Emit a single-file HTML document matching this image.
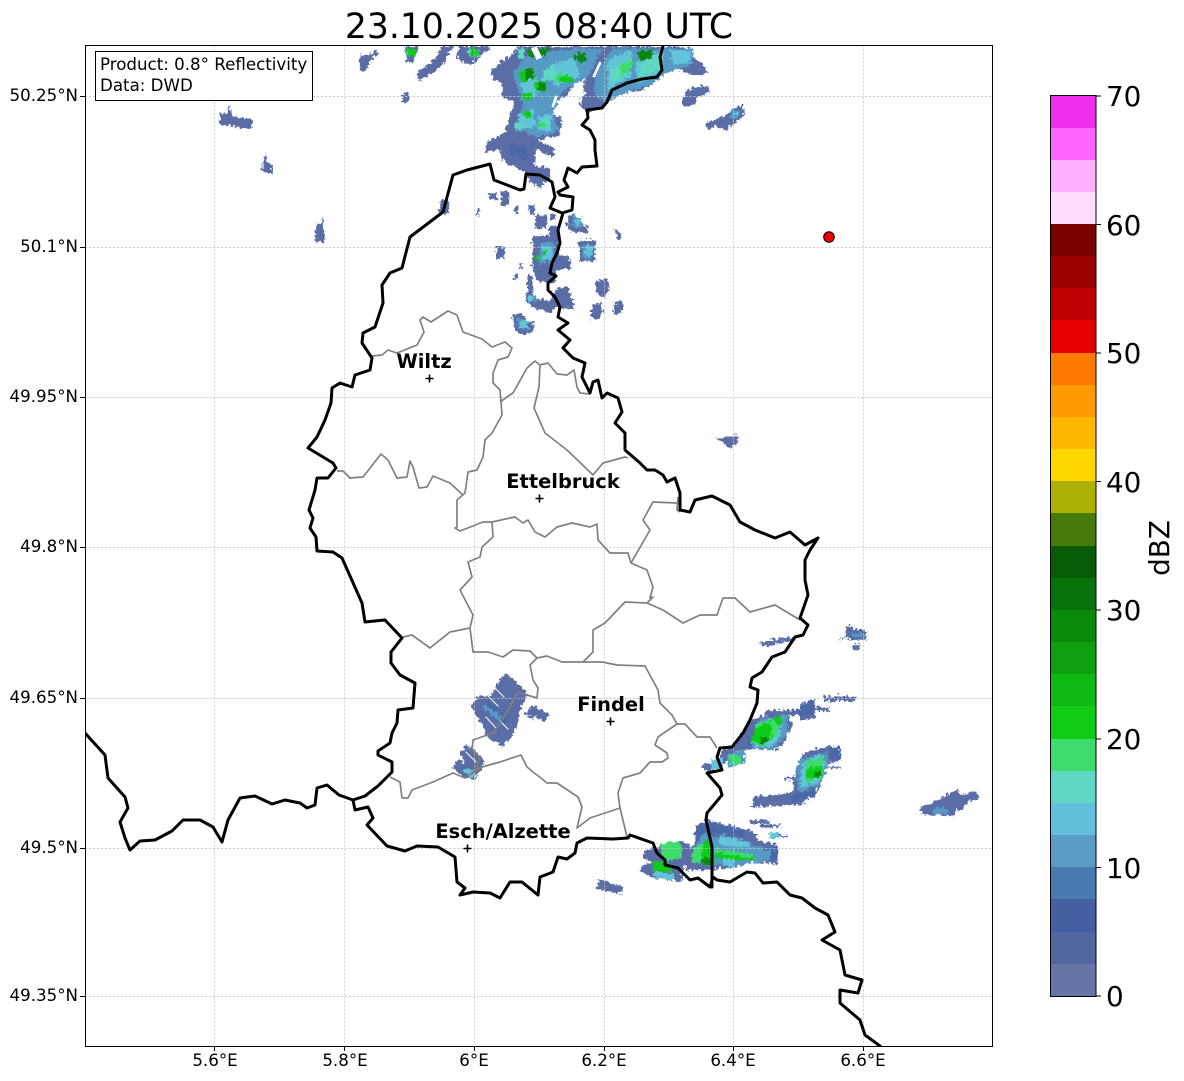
<!DOCTYPE html>
<html lang="en">
<head>
<meta charset="utf-8">
<title>23.10.2025 08:40 UTC</title>
<style>
html,body{margin:0;padding:0;background:#fff}
svg{display:block}
text{font-family:"DejaVu Sans","Liberation Sans",sans-serif;fill:#000}
.t{font-size:16.67px}
.c{font-size:19.44px;font-weight:bold;text-anchor:middle}
.b{font-size:27.8px}
.g{fill:none;stroke:#808080;stroke-width:1.7;stroke-linejoin:round}
.k{fill:none;stroke:#000;stroke-width:3;stroke-linejoin:round;stroke-linecap:round}
</style>
</head>
<body>
<svg width="1184" height="1081" viewBox="0 0 1184 1081" xmlns="http://www.w3.org/2000/svg">
<defs>
<clipPath id="ax"><rect x="85" y="45" width="907" height="1001"/></clipPath>
<filter id="rough" filterUnits="userSpaceOnUse" x="85" y="30" width="907" height="900">
<feTurbulence type="turbulence" baseFrequency="0.22" numOctaves="1" seed="4" result="n"/>
<feDisplacementMap in="SourceGraphic" in2="n" scale="7" xChannelSelector="R" yChannelSelector="G"/>
</filter>
</defs>
<rect width="1184" height="1081" fill="#fff"/>
<g clip-path="url(#ax)">
<g filter="url(#rough)">
<!-- rain base -->
<g fill="#5a6da6">
<polygon points="517,44 505,56 488,68 492,78 499,80 500,95 512,100 505,120 503,130 484,140 482,150 497,148 503,160 520,168 527,178 537,186 548,176 548,167 532,163 533,146 540,150 552,155 552,145 535,138 557,133 560,115 546,112 552,100 565,92 572,82 583,75 578,103 585,110 598,106 612,92 640,88 662,72 668,65 690,72 707,72 700,62 692,55 680,44"/>
<polygon points="358,53 368,52 375,47 376,52 370,58 362,69 357,68"/>
<polygon points="402,44 416,44 410,60 405,59"/>
<polygon points="440,44 451,44 442,60 430,70 420,78 415,77 416,68 428,62"/>
<polygon points="458,44 490,44 480,52 470,62 460,60 453,53"/>
<rect x="400" y="92" width="6" height="8"/>
<polygon points="217,111 224,112 227,102 229,112 240,116 250,117 249,128 240,126 228,124 218,122"/>
<polygon points="260,160 263,152 265,160 270,162 270,172 261,170"/>
<polygon points="313,223 319,220 320,213 321,222 322,240 313,240"/>
<rect x="437" y="198" width="9" height="14"/>
<rect x="487" y="190" width="8" height="7"/>
<rect x="499" y="189" width="7" height="14"/>
<rect x="513" y="205" width="3" height="6"/>
<rect x="527" y="202" width="5" height="10"/>
<rect x="474" y="207" width="3" height="7"/>
<rect x="533" y="213" width="11" height="13"/>
<rect x="547" y="212" width="6" height="6"/>
<polygon points="565,213 572,212 579,222 585,225 585,230 572,230 565,226"/>
<polygon points="612,227 614,227 618,234 618,237 616,237"/>
<rect x="577" y="238" width="16" height="21"/>
<rect x="494" y="244" width="8" height="12"/>
<polygon points="547,223 557,223 557,252 568,253 568,267 553,267 553,280 535,280 530,268 530,233 547,233"/>
<rect x="518" y="260" width="2" height="6"/>
<rect x="512" y="271" width="3" height="6"/>
<rect x="525" y="273" width="5" height="20"/>
<polygon points="523,290 530,290 534,297 548,298 553,287 565,285 572,300 572,307 563,306 553,305 548,310 535,307 527,302 523,299"/>
<polygon points="593,279 604,277 607,285 604,295 597,294 593,287"/>
<polygon points="591,302 600,300 601,310 595,318 590,318 589,308"/>
<polygon points="611,303 618,298 622,308 614,312 611,310"/>
<polygon points="510,313 518,310 525,318 532,320 530,330 521,332 514,328 511,322"/>
<polygon points="683,90 690,86 705,83 707,90 695,95 690,105 680,102"/>
<polygon points="704,120 710,118 722,113 732,105 741,103 742,112 733,120 724,128 712,124 704,127"/>
<polygon points="714,436 725,434 736,433 735,440 727,446 720,440"/>
<polygon points="757,640 770,638 792,635 793,637 775,641 760,645"/>
<polygon points="843,624 849,624 850,627 864,627 864,637 845,637 844,636 836,637 843,634"/>
<rect x="850" y="642" width="7" height="5"/>
<rect x="821" y="694" width="32" height="5"/>
<polygon points="797,704 812,697 813,715 797,718"/>
<rect x="763" y="708" width="36" height="5"/>
<rect x="811" y="705" width="16" height="4"/>
<polygon points="745,722 752,716 772,712 785,712 790,722 782,740 775,748 750,746 735,748 722,760 718,767 708,770 700,765 702,760 712,762 720,748 733,742"/>
<polygon points="820,745 838,744 838,757 822,762 818,783 812,792 800,802 750,805 750,795 765,793 790,790 793,770 800,752"/>
<rect x="782" y="775" width="10" height="3"/>
<rect x="820" y="764" width="18" height="2"/>
<polygon points="918,805 930,800 940,795 950,790 955,787 958,792 975,790 977,796 965,800 960,806 955,808 950,813 940,813 920,812"/>
<polygon points="693,823 707,818 747,828 755,832 755,838 775,843 775,862 753,860 730,865 707,868 685,868 683,853 692,840"/>
<rect x="747" y="818" width="21" height="3"/>
<rect x="757" y="822" width="21" height="3"/>
<rect x="777" y="833" width="8" height="2"/>
<polygon points="642,848 653,845 678,838 688,843 688,848 680,872 683,876 677,879 652,876 637,868 640,862 650,860 640,855"/>
<polygon points="597,876 620,884 619,892 595,886"/>
<polygon points="503,670 520,685 525,690 520,702 512,730 500,745 485,735 480,723 468,703 477,692 487,695 497,678"/>
<polygon points="530,703 547,712 541,719 532,714 532,718 522,712 525,708"/>
<polygon points="465,742 482,757 480,765 472,777 458,773 450,765 455,758 462,762 458,752"/>
</g>
<!-- rain dark blue -->
<g fill="#4a68a8">
<polygon points="488,700 505,715 500,725 485,710"/>
<polygon points="505,140 525,145 525,158 508,152"/>
<polygon points="797,702 811,698 811,712 797,714"/>
<polygon points="828,745 838,745 838,755 828,757"/>
<polygon points="693,824 708,820 742,829 742,835 712,830 708,842 693,842"/>
<polygon points="755,850 775,846 775,859 755,858"/>
<polygon points="745,734 755,730 755,742 745,744"/>
<polygon points="790,793 815,786 812,794 790,800"/>
</g>
<!-- rain mid blue -->
<g fill="#559ac4">
<polygon points="510,72 525,52 575,46 600,46 585,75 562,88 550,112 558,128 535,135 515,125 520,100 515,85"/>
<polygon points="592,72 610,46 690,46 690,62 665,70 650,82 620,92 602,100 592,92"/>
<polygon points="537,240 551,240 551,260 537,262"/>
<rect x="571" y="215" width="8" height="10"/><rect x="580" y="242" width="11" height="14"/>
<polygon points="514,314 524,318 528,328 517,326"/>
<rect x="525" y="292" width="8" height="8"/><rect x="728" y="108" width="9" height="8"/>
<rect x="931" y="806" width="14" height="6"/><rect x="850" y="631" width="13" height="3"/>
<rect x="768" y="830" width="10" height="6"/>
<polygon points="755,718 785,712 785,730 772,747 750,745"/>
<polygon points="725,752 743,746 743,760 725,765"/>
<polygon points="796,758 820,750 826,752 824,770 815,785 795,790"/>
<polygon points="700,832 745,840 768,850 768,858 730,864 692,862 692,845"/>
<polygon points="480,705 484,703 500,715 497,719"/>
</g>
<!-- rain light teal -->
<g fill="#62c4d8">
<polygon points="518,82 534,74 538,90 524,97"/>
<polygon points="546,63 572,55 577,74 553,85"/>
<polygon points="516,112 530,106 534,124 518,128"/>
<polygon points="536,114 550,112 548,128 538,128"/>
<polygon points="605,58 630,48 628,74 606,88"/>
<polygon points="632,60 662,46 660,68 636,82"/>
<polygon points="668,48 688,48 688,60 670,62"/>
<polygon points="540,245 549,245 549,257 540,257"/>
<rect x="518" y="318" width="8" height="8"/>
<rect x="573" y="216" width="5" height="7"/><rect x="583" y="244" width="7" height="10"/>
<rect x="525" y="293" width="6" height="6"/><rect x="731" y="110" width="4" height="4"/>
<polygon points="708,758 720,754 720,768 708,769"/>
<polygon points="801,760 816,752 824,762 816,780 798,785"/>
<polygon points="755,722 780,714 778,735 768,744 752,745"/>
<polygon points="718,833 745,839 748,846 716,842"/>
<polygon points="720,855 732,855 732,865 720,864"/>
<polygon points="652,868 672,872 672,878 652,875"/>
<rect x="767" y="830" width="10" height="6"/>
<polygon points="460,768 466,766 473,771 470,776"/>
</g>
<!-- rain mint -->
<g fill="#5ed8c2">
<rect x="512" y="120" width="7" height="8"/><polygon points="537,117 547,117 546,126 538,126"/>
<polygon points="540,68 554,64 553,76 541,80"/>
<polygon points="608,68 628,56 626,72 610,80"/>
<polygon points="637,62 660,50 658,66 638,76"/>
<rect x="516" y="46" width="6" height="10"/>
<rect x="466" y="46" width="11" height="8"/><rect x="404" y="46" width="9" height="8"/>
<polygon points="805,760 822,754 820,770 803,772"/>
</g>
<!-- rain bright mint green -->
<g fill="#3edc6c">
<polygon points="753,722 778,714 776,730 762,744 750,741"/>
<rect x="728" y="752" width="10" height="10"/>
<polygon points="804,760 821,755 819,776 803,780"/>
<polygon points="657,842 678,838 680,855 660,860"/>
<polygon points="690,845 700,841 712,860 690,860"/>
<polygon points="712,846 752,852 752,856 712,850"/>
<rect x="555" y="72" width="12" height="8"/>
<polygon points="618,62 630,58 628,70 618,74"/>
<rect x="537" y="120" width="7" height="4"/>
</g>
<!-- rain green -->
<g fill="#10cc14">
<polygon points="752,726 768,720 770,735 762,742 750,738"/>
<rect x="772" y="714" width="7" height="8"/>
<polygon points="803,767 820,763 818,775 803,778"/>
<polygon points="650,858 668,862 670,870 650,868"/>
<polygon points="702,838 708,838 712,860 698,862"/>
<polygon points="712,850 752,856 752,859 712,855"/>
<rect x="557" y="74" width="13" height="6"/><rect x="521" y="108" width="7" height="7"/><rect x="520" y="90" width="9" height="7"/>
<polygon points="532,80 543,78 545,88 534,90"/>
<polygon points="516,70 530,64 533,76 520,80"/>
<rect x="540" y="248" width="4" height="5"/><rect x="533" y="253" width="4" height="6"/>
<rect x="405" y="46" width="8" height="8"/><rect x="468" y="46" width="8" height="7"/>
</g>
<!-- rain dark green -->
<g fill="#0a860a">
<polygon points="522,68 530,65 532,76 524,78"/>
<polygon points="523,48 548,46 540,55 528,55"/>
<polygon points="573,53 583,50 584,59 575,61"/>
<polygon points="635,50 651,46 649,56 637,58"/>
<rect x="699" y="856" width="10" height="6"/><rect x="536" y="80" width="7" height="8"/><rect x="758" y="735" width="8" height="6"/>
<rect x="812" y="769" width="6" height="6"/>
</g>
</g>
<!-- white gaps in rain -->
<g fill="none" stroke="#fff" stroke-linecap="square">
<path stroke-width="6" d="M535 50L538 56"/>
<path stroke-width="2.500" d="M600 63L594 76M585 93L580 97M556 97L553 106"/>
<path stroke-width="1" d="M495 688L504 697M488 696L498 706M486 717L496 728M500 721L508 729M466 752L476 762M748 828L755 830M760 838L772 842"/>
</g>
<!-- grid -->
<g fill="none" stroke="#c4c4c4" stroke-width="0.7" stroke-dasharray="2.5 1.5">
<path d="M214.500 45V1046M344.500 45V1046M474.500 45V1046M604.500 45V1046M733.500 45V1046M863.500 45V1046"/>
<path d="M85 96.500H992M85 247.500H992M85 397.500H992M85 547.500H992M85 698.500H992M85 848.500H992M85 996.500H992"/>
</g>
<!-- cantons -->
<g class="g">
<polyline points="372,356 382,355 388,350 397,353 417,345 424,332 420,320 423,317 431,322 448,311 457,315 463,332 482,339 492,347 505,342 512,348 508,357 498,360 493,373 493,383 500,390 501,402 502,415 492,433 485,440 483,457 477,470 468,472 465,493 457,500 457,527 455,528 460,531 483,522 492,522 510,518 515,517 523,523 528,520 535,532 545,537 557,527 572,523 590,527 597,524 598,540 610,553 628,553 631,563 647,570 653,587 650,598 653,597 647,603"/>
<polyline points="337,471 343,471 350,478 363,477 381,454 388,460 397,478 407,477 410,461 413,467 419,488 427,487 433,476 450,483 463,495"/>
<polyline points="500,402 507,397 513,393 527,368 535,361 540,365 548,363 557,374 567,375 574,370 577,387 580,393 590,394"/>
<polyline points="540,365 539,387 534,408 545,433 567,450 593,475 603,463 625,457 628,458"/>
<polyline points="677,503 653,502 643,520 650,530 631,563"/>
<polyline points="678,497 677,510 680,512"/>
<polyline points="492,522 493,537 482,547 480,557 468,562 472,577 460,590 473,615 470,628 473,652 488,652 503,657 513,650 530,651 537,658 547,656 562,662 583,662 593,652 593,630 605,623 625,602 647,603 663,610 683,623 700,615 717,615 723,598 735,598 750,612 775,605 800,620"/>
<polyline points="403,637 412,635 430,648 450,632 470,628"/>
<polyline points="583,662 602,662 617,665 645,666 658,690 660,703 672,715 677,724 685,724 697,737 710,737 717,748"/>
<polyline points="677,724 658,737 655,745 667,753 668,758 662,762 650,762 640,773 623,778 618,793 620,808 590,818 577,828 582,807 578,797 557,783 547,783 541,778 533,772 527,767 521,755 500,762 482,767 465,778 453,773 433,782 412,790 408,798 402,798 400,782 390,777"/>
<polyline points="620,808 627,837"/>
<polyline points="537,658 530,665 533,680 538,688 537,698 527,695 518,692 507,712 500,723 493,733 473,740 472,750 480,757 476,770 465,778"/>
</g>
<!-- country borders -->
<g class="k">
<polyline points="85,733 105,755 108,778 125,797 128,808 120,822 125,838 130,850 140,841 155,840 172,831 183,820 200,820 213,827 222,842 228,820 240,798 255,796 272,804 285,800 300,803 307,808 315,805 317,788 327,785 339,795 353,800 365,796 378,786 392,772 392,762 378,755 378,751 390,743 392,733 397,723 398,710 413,708 415,683 400,675 391,663 391,652 402,638 385,620 365,622 362,603 342,558 333,552 317,551 316,537 310,528 313,518 309,510 315,490 317,478 328,478 336,468 333,463 308,448 317,437 325,420 331,403 332,388 340,383 352,387 355,375 370,370 372,358 362,343 363,333 375,327 383,303 382,285 390,273 402,268 410,237 443,212 453,175 467,170 490,164 494,180 520,190 524,189 526,174 540,175 552,182 555,197 550,208 562,213 572,210 573,197 560,195 558,192 568,187 564,180 568,168 577,173 582,167 597,166 595,150 595,140 590,130 582,125 588,118 587,110 602,108 607,102 612,90 627,83 642,79 657,77 662,70 660,57 663,46"/>
<polyline points="563,213 558,230 560,243 557,253 552,263 550,273 556,276 548,283 548,290 555,297 560,307 558,317 568,323 558,330 570,340 563,348 573,358 585,363 582,377 590,393 593,382 598,380 602,398 607,393 618,398 622,412 615,423 625,433 625,450 640,463 647,470 655,470 663,475 667,482 675,478 680,493 680,510 690,512 695,500 712,496 730,505 740,522 755,530 775,538 790,532 805,545 818,538 810,550 805,560 805,580 808,595 800,618 808,625 803,635 795,637 785,652 772,657 762,672 752,678 750,687 758,690 757,703 750,720 743,733 732,747 720,748 717,757 722,770 707,773 720,788 722,795 707,813 706,820 712,847 712,887"/>
<polyline points="353,800 355,810 368,807 373,818 367,825 387,846 405,851 417,846 438,847 455,857 457,882 465,888 460,895 473,892 490,893 500,898 510,882 522,882 538,895 540,877 553,872 558,857 567,859 575,853 577,843 587,838 613,839 628,838 630,835 653,843 657,853 665,860 665,865 678,868 690,880 698,878 710,887 713,877 717,880 730,882 747,872 755,873 763,883 777,882 790,895 802,898 815,908 828,915 835,932 822,940 840,950 845,975 862,980 858,993 840,990 840,1003 860,1020 865,1035 880,1046"/>
</g>
<!-- city markers -->
<g stroke="#000" stroke-width="1.6">
<path d="M425.500 378.500h8M429.500 374.500v8M535.500 498.500h8M539.500 494.500v8M606.500 721.500h8M610.500 717.500v8M463.500 848.500h8M467.500 844.500v8"/>
</g>
<circle cx="829" cy="237" r="5.300" fill="#f00000" stroke="#000" stroke-width="1"/>
<text class="c" x="424" y="368">Wiltz</text>
<text class="c" x="563" y="488">Ettelbruck</text>
<text class="c" x="611" y="711">Findel</text>
<text class="c" x="503" y="838">Esch/Alzette</text>
</g>
<!-- axes frame -->
<rect x="85.500" y="45.500" width="907" height="1001" fill="none" stroke="#000" stroke-width="1"/>
<!-- ticks -->
<path d="M214.500 1046v5M344.500 1046v5M474.500 1046v5M604.500 1046v5M733.500 1046v5M863.500 1046v5M85 96.500h-5M85 247.500h-5M85 397.500h-5M85 547.500h-5M85 698.500h-5M85 848.500h-5M85 996.500h-5" stroke="#000" stroke-width="1" fill="none"/>
<g class="t">
<text x="215" y="1066" text-anchor="middle">5.6°E</text>
<text x="345" y="1066" text-anchor="middle">5.8°E</text>
<text x="474" y="1066" text-anchor="middle">6°E</text>
<text x="604" y="1066" text-anchor="middle">6.2°E</text>
<text x="733" y="1066" text-anchor="middle">6.4°E</text>
<text x="863" y="1066" text-anchor="middle">6.6°E</text>
<text x="78" y="101" text-anchor="end">50.25°N</text>
<text x="78" y="252" text-anchor="end">50.1°N</text>
<text x="78" y="402" text-anchor="end">49.95°N</text>
<text x="78" y="552" text-anchor="end">49.8°N</text>
<text x="78" y="703" text-anchor="end">49.65°N</text>
<text x="78" y="853" text-anchor="end">49.5°N</text>
<text x="78" y="1001" text-anchor="end">49.35°N</text>
</g>
<!-- info box -->
<rect x="95.500" y="51.500" width="217" height="49" fill="#fff" stroke="#000" stroke-width="1"/>
<text class="t" x="100" y="70">Product: 0.8° Reflectivity</text>
<text class="t" x="100" y="91">Data: DWD</text>
<!-- title -->
<text x="539" y="38" text-anchor="middle" font-size="34.6">23.10.2025 08:40 UTC</text>
<!-- colorbar -->
<g shape-rendering="crispEdges">
<rect x="1051" y="96" width="45" height="32.5" fill="#ee30ee"/>
<rect x="1051" y="128" width="45" height="32.5" fill="#ff66ff"/>
<rect x="1051" y="160" width="45" height="32.5" fill="#ffb0ff"/>
<rect x="1051" y="192" width="45" height="32.5" fill="#ffdcff"/>
<rect x="1051" y="224" width="45" height="32.5" fill="#7a0000"/>
<rect x="1051" y="256" width="45" height="32.5" fill="#9c0000"/>
<rect x="1051" y="288" width="45" height="32.5" fill="#bf0000"/>
<rect x="1051" y="320" width="45" height="33" fill="#e60000"/>
<rect x="1051" y="353" width="45" height="32" fill="#ff7a00"/>
<rect x="1051" y="385" width="45" height="32" fill="#ff9a00"/>
<rect x="1051" y="417" width="45" height="32" fill="#ffb800"/>
<rect x="1051" y="449" width="45" height="32" fill="#ffd700"/>
<rect x="1051" y="481" width="45" height="32" fill="#adb005"/>
<rect x="1051" y="513" width="45" height="33" fill="#477a08"/>
<rect x="1051" y="546" width="45" height="32" fill="#085c08"/>
<rect x="1051" y="578" width="45" height="32" fill="#0a720a"/>
<rect x="1051" y="610" width="45" height="32" fill="#0c8a0c"/>
<rect x="1051" y="642" width="45" height="32" fill="#0ea00f"/>
<rect x="1051" y="674" width="45" height="32" fill="#0fb812"/>
<rect x="1051" y="706" width="45" height="33" fill="#10cc14"/>
<rect x="1051" y="739" width="45" height="32" fill="#3edc6c"/>
<rect x="1051" y="771" width="45" height="32" fill="#60d6c4"/>
<rect x="1051" y="803" width="45" height="32" fill="#63c0dc"/>
<rect x="1051" y="835" width="45" height="32" fill="#5a9cc4"/>
<rect x="1051" y="867" width="45" height="32" fill="#4a7bb0"/>
<rect x="1051" y="899" width="45" height="33" fill="#4460a0"/>
<rect x="1051" y="932" width="45" height="32" fill="#52669f"/>
<rect x="1051" y="964" width="45" height="32" fill="#6575a8"/>
</g>
<rect x="1050.500" y="95.500" width="45.500" height="901" fill="none" stroke="#000" stroke-width="1"/>
<path d="M1096 96h5M1096 224.500h5M1096 353h5M1096 481.500h5M1096 610h5M1096 739h5M1096 867.500h5M1096 996h5" stroke="#000" stroke-width="1" fill="none"/>
<g class="b">
<text x="1106" y="106">70</text>
<text x="1106" y="235">60</text>
<text x="1106" y="363">50</text>
<text x="1106" y="492">40</text>
<text x="1106" y="620">30</text>
<text x="1106" y="749">20</text>
<text x="1106" y="878">10</text>
<text x="1106" y="1006">0</text>
</g>
<text class="b" transform="translate(1169 548) rotate(-90)" text-anchor="middle">dBZ</text>
</svg>
</body>
</html>
